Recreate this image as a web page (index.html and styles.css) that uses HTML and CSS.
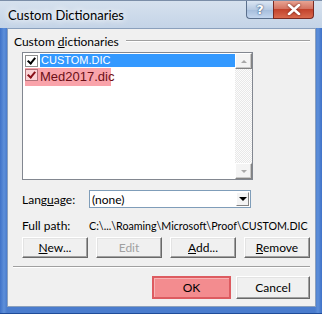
FILE: index.html
```html
<!DOCTYPE html>
<html lang="en">
<head>
    <meta charset="UTF-8">
    <title>Custom Dictionaries</title>
    <link rel="stylesheet" href="styles.css">
</head>
<body>
    <div class="window">
        <div class="titlebar">
            <span class="title">Custom Dictionaries</span>
            <div class="caption-btns">
                <span class="cap-btn help">?</span>
                <span class="cap-btn close">
                    <svg width="14" height="11" viewBox="0 0 14 11">
                        <path d="M2 1 L12 10 M12 1 L2 10" stroke="#fff" stroke-width="2.6" stroke-linecap="round"/>
                    </svg>
                </span>
            </div>
        </div>

        <div class="frame">
            <div class="client">
                <div class="group-head">
                    <span>Custom <u>d</u>ictionaries</span>
                    <span class="group-line"></span>
                </div>

                <div class="listbox">
                    <div class="list-items">
                        <div class="item selected">
                            <span class="check"></span>
                            <span class="item-text">CUSTOM.DIC</span>
                        </div>
                        <div class="item marked">
                            <span class="check red"></span>
                            <span class="item-text">Med2017.dic</span>
                        </div>
                    </div>
                    <div class="scrollbar">
                        <span class="scroll-btn up"><i class="arrow-up"></i></span>
                        <span class="scroll-track"></span>
                        <span class="scroll-btn"><i class="arrow-down"></i></span>
                    </div>
                </div>

                <div class="field-row">
                    <span class="field-label">Lang<u>u</u>age:</span>
                    <div class="combo">
                        <span class="combo-text">(none)</span>
                        <span class="combo-btn"><i class="arrow-down dark"></i></span>
                    </div>
                </div>

                <div class="field-row path-row">
                    <span class="field-label">Full path:</span>
                    <span class="path">C:\...\Roaming\Microsoft\Proof\CUSTOM.DIC</span>
                </div>

                <div class="btn-row">
                    <button class="btn"><u>N</u>ew...</button>
                    <button class="btn" disabled>Edit</button>
                    <button class="btn"><u>A</u>dd...</button>
                    <button class="btn"><u>R</u>emove</button>
                </div>

                <div class="separator"></div>

                <div class="footer-btns">
                    <button class="btn ok">OK</button>
                    <button class="btn cancel">Cancel</button>
                </div>
            </div>
        </div>
    </div>
</body>
</html>
```

FILE: styles.css
```css
* {
    margin: 0;
    padding: 0;
    box-sizing: border-box;
}

body {
    width: 322px;
    height: 314px;
    overflow: hidden;
    font-family: Lato, 'Open Sans', sans-serif;
    font-size: 12px;
    color: #000;
}

.window {
    width: 322px;
    height: 314px;
    display: flex;
    flex-direction: column;
    background: #c9d7e8;
}

.titlebar {
    height: 28px;
    display: flex;
    align-items: flex-start;
    background: linear-gradient(180deg, #d6e1ee 0%, #c4d4e7 100%);
    border-top: 1px solid #7b8ea8;
}

.title {
    padding: 6px 0 0 8px;
    font-size: 13px;
    text-shadow: 0 0 8px #fff, 0 0 6px #fff;
}

.caption-btns {
    margin-left: auto;
    margin-right: 8px;
    display: flex;
}

.cap-btn {
    height: 18px;
    display: flex;
    align-items: center;
    justify-content: center;
    border: 1px solid #5a6f8c;
    border-top: none;
}

.help {
    width: 27px;
    border-radius: 0 0 0 4px;
    border-right: none;
    background: linear-gradient(180deg, #dbe6f3 0%, #b7cae2 50%, #a4bcdb 51%, #c3d6ee 100%);
    color: #fff;
    font-family: 'DejaVu Sans', sans-serif;
    font-weight: bold;
    font-size: 13px;
    text-shadow: 0 0 2px #34527c, 0 0 1px #34527c;
}

.close {
    width: 41px;
    border-radius: 0 0 4px 0;
    border-color: #7a2a22;
    background: linear-gradient(180deg, #e8a493 0%, #d47462 45%, #c3432c 50%, #d96a4e 100%);
}

.close svg {
    filter: drop-shadow(0 0 1px #6b1b10);
}

.frame {
    flex: 1;
    display: flex;
    padding: 0 6px 6px 7px;
    background: linear-gradient(90deg, #3f72c8 0%, #5d8fd9 4px, #4a7ccd 7px, #4a7ccd calc(100% - 7px), #5d8fd9 calc(100% - 4px), #3f72c8 100%);
    border-bottom: 1px solid #1f4c99;
}

.client {
    flex: 1;
    min-width: 0;
    display: flex;
    flex-direction: column;
    background: #f0f0f0;
    border: 1px solid #8ba0bc;
    padding: 4px 5px 0 5px;
}

.group-head {
    display: flex;
    align-items: center;
    gap: 7px;
    height: 16px;
    padding-left: 1px;
}

.group-line {
    flex: 1;
    height: 2px;
    border-top: 1px solid #a0a0a0;
    border-bottom: 1px solid #fff;
}

.listbox {
    margin: 3px 0 0 9px;
    width: 231px;
    height: 128px;
    display: flex;
    background: #fff;
    border: 1px solid #828790;
}

.list-items {
    flex: 1;
    padding: 1px 0 0 2px;
    font-family: 'Liberation Sans', Arial, sans-serif;
    font-size: 11px;
}

.item {
    display: flex;
    align-items: center;
    height: 13px;
    gap: 2px;
}

.item.marked {
    width: 86px;
    height: 18px;
    align-items: flex-start;
    padding-top: 1px;
    margin-top: 1px;
    background: #f9a3aa;
    color: #6b0f16;
    font-size: 13px;
}

.check {
    width: 13px;
    height: 12px;
    flex: none;
    position: relative;
    background: #fff;
    border: 1px solid #8e8f8f;
}

.check::after {
    content: "";
    position: absolute;
    left: 3px;
    top: 0px;
    width: 3px;
    height: 6px;
    border: solid #000;
    border-width: 0 2px 2px 0;
    transform: rotate(40deg);
}

.check.red {
    background: #fbd3d6;
    border-color: #b07078;
}

.check.red::after {
    border-color: #8a1018;
}

.selected .item-text {
    flex: 1;
    background: #3399ff;
    color: #fff;
    height: 13px;
    line-height: 13px;
    padding-left: 1px;
}

.scrollbar {
    width: 17px;
    display: flex;
    flex-direction: column;
    background: repeating-conic-gradient(#e8e8e8 0 25%, #fcfcfc 0 50%) 0 0 / 2px 2px;
}

.scroll-btn {
    height: 16px;
    display: flex;
    align-items: center;
    justify-content: center;
    background: #f4f4f4;
    border: 1px solid;
    border-color: #fff #838383 #838383 #fff;
    box-shadow: inset -1px -1px #c8c8c8;
}

.scroll-track {
    flex: 1;
}

.arrow-up {
    width: 0;
    height: 0;
    border-left: 3px solid transparent;
    border-right: 3px solid transparent;
    border-bottom: 3px solid #a8a8a8;
}

.arrow-down {
    width: 0;
    height: 0;
    border-left: 3px solid transparent;
    border-right: 3px solid transparent;
    border-top: 3px solid #a8a8a8;
}

.arrow-down.dark {
    border-left-width: 4px;
    border-right-width: 4px;
    border-top: 4px solid #000;
}

.field-row {
    display: flex;
    align-items: center;
    margin-left: 9px;
    margin-top: 10px;
}

.field-label {
    width: 67px;
    flex: none;
}

.combo {
    width: 162px;
    height: 18px;
    display: flex;
    align-items: center;
    background: #fff;
    border: 1px solid #7f9db9;
    padding: 0 1px 0 2px;
}

.combo-text {
    flex: 1;
}

.combo-btn {
    width: 13px;
    height: 14px;
    display: flex;
    align-items: center;
    justify-content: center;
    background: #f4f4f4;
    border: 1px solid;
    border-color: #fff #838383 #838383 #fff;
}

.path-row {
    margin-top: 10px;
}

.path {
    font-size: 10.7px;
    white-space: nowrap;
}

.btn {
    height: 21px;
    font-family: Lato, sans-serif;
    font-size: 12px;
    color: #000;
    background: #f0f0f0;
    border: 1px solid;
    border-color: #fff #696969 #696969 #fff;
    box-shadow: inset -1px -1px #a0a0a0, inset 1px 1px #e3e3e3;
}

.btn:disabled {
    color: #a0a0a0;
}

.btn-row {
    display: flex;
    justify-content: space-between;
    margin: 4px 0 0 9px;
}

.btn-row .btn {
    width: 66px;
}

.separator {
    height: 2px;
    margin-top: 8px;
    border-top: 1px solid #a0a0a0;
    border-bottom: 1px solid #fff;
}

.footer-btns {
    display: flex;
    justify-content: flex-end;
    gap: 5px;
    margin-top: 8px;
}

.footer-btns .btn {
    height: 23px;
}

.ok {
    width: 79px;
    background: #f38c8f;
    border: 2px solid #dd5b60;
    box-shadow: inset 1px 1px #f7b3b5;
}

.cancel {
    width: 74px;
}
```
